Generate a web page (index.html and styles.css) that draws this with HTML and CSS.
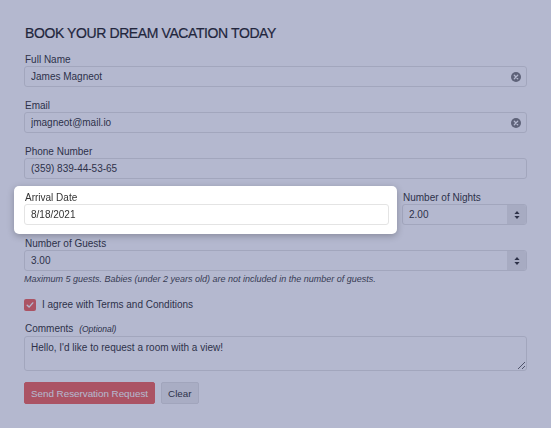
FILE: index.html
```html
<!DOCTYPE html>
<html lang="en">
<head>
    <meta charset="UTF-8">
    <meta name="viewport" content="width=device-width, initial-scale=1.0">
    <title>Book Your Dream Vacation</title>
    <link rel="stylesheet" href="styles.css">
</head>
<body>
    <div class="page">
        <h1>Book your dream vacation today</h1>

        <div class="field">
            <label>Full Name</label>
            <div class="control">
                <input type="text" value="James Magneot">
                <span class="clear">
                    <svg width="10" height="10" viewBox="0 0 10 10"><circle cx="5" cy="5" r="5" fill="#7d7d7d"/><path d="M3.3 3.3l3.4 3.4M6.7 3.3l-3.4 3.4" stroke="#fff" stroke-width="1.3" stroke-linecap="round"/></svg>
                </span>
            </div>
        </div>

        <div class="field">
            <label>Email</label>
            <div class="control">
                <input type="text" value="jmagneot@mail.io">
                <span class="clear">
                    <svg width="10" height="10" viewBox="0 0 10 10"><circle cx="5" cy="5" r="5" fill="#7d7d7d"/><path d="M3.3 3.3l3.4 3.4M6.7 3.3l-3.4 3.4" stroke="#fff" stroke-width="1.3" stroke-linecap="round"/></svg>
                </span>
            </div>
        </div>

        <div class="field">
            <label>Phone Number</label>
            <div class="control">
                <input type="text" value="(359) 839-44-53-65">
            </div>
        </div>

        <div class="field row">
            <div class="col-grow spotlight">
                <label>Arrival Date</label>
                <div class="control">
                    <input type="text" value="8/18/2021">
                </div>
            </div>
            <div class="col-nights">
                <label>Number of Nights</label>
                <div class="control">
                    <input type="text" value="2.00">
                    <span class="stepper">
                        <svg width="6" height="10" viewBox="0 0 6 10"><path d="M3 1L5.6 4H0.4z M3 9L5.6 6H0.4z" fill="#333"/></svg>
                    </span>
                </div>
            </div>
        </div>

        <div class="field">
            <label>Number of Guests</label>
            <div class="control">
                <input type="text" value="3.00">
                <span class="stepper">
                    <svg width="6" height="10" viewBox="0 0 6 10"><path d="M3 1L5.6 4H0.4z M3 9L5.6 6H0.4z" fill="#333"/></svg>
                </span>
            </div>
            <div class="help">Maximum 5 guests. Babies (under 2 years old) are not included in the number of guests.</div>
        </div>

        <label class="check">
            <span class="box">
                <svg width="8" height="8" viewBox="0 0 8 8"><path d="M1.2 4.2l1.9 1.9 3.7-4.2" stroke="#fff" stroke-width="1.4" fill="none" stroke-linecap="round" stroke-linejoin="round"/></svg>
            </span>
            I agree with Terms and Conditions
        </label>

        <div class="field">
            <label>Comments <em>(Optional)</em></label>
            <textarea>Hello, I'd like to request a room with a view!</textarea>
        </div>

        <div class="actions">
            <button class="btn btn-primary">Send Reservation Request</button>
            <button class="btn">Clear</button>
        </div>
    </div>

    <!-- dims everything except the highlighted field -->
    <div class="overlay"></div>
</body>
</html>
```

FILE: styles.css
```css
body {
    margin: 0;
    background: #fff;
    font-family: "Liberation Sans", Arial, sans-serif;
    color: #333;
}
.page {
    padding: 23px 24px 0 24px;
}
h1 {
    margin: 0 0 11px 1px;
    font-size: 14px;
    line-height: 20px;
    font-weight: normal;
    letter-spacing: -0.4px;
    text-transform: uppercase;
    color: #222;
    -webkit-text-stroke: 0.2px #222;
}
.field {
    margin-bottom: 13px;
}
.field label {
    display: block;
    font-size: 10px;
    line-height: 12px;
    margin-left: 1px;
}
.field label em {
    font-size: 8.5px;
    margin-left: 3px;
}
.control {
    display: flex;
    align-items: center;
    height: 21px;
    box-sizing: border-box;
    border: 1px solid #e4e4e4;
    border-radius: 3px;
    background: #fff;
}
.control input {
    flex: 1;
    min-width: 0;
    border: none;
    background: transparent;
    font: inherit;
    font-size: 10px;
    color: #333;
    padding: 0 6px;
    outline: none;
}
.clear {
    display: flex;
    margin-right: 5px;
}
.stepper {
    display: flex;
    align-items: center;
    justify-content: center;
    width: 19px;
    height: 100%;
    background: #ececec;
    border-radius: 0 2px 2px 0;
}
.row {
    display: flex;
    align-items: flex-start;
    gap: 13px;
}
.col-grow {
    flex: 1;
}
.col-nights {
    width: 125px;
}
.spotlight {
    position: relative;
    z-index: 10;
    background: #fff;
    margin: -6px -8px -9px -10px;
    padding: 6px 8px 9px 10px;
    border-radius: 5px;
    box-shadow: 0 2px 7px rgba(0, 0, 0, 0.25);
}
.help {
    margin-top: 3px;
    font-size: 9px;
    line-height: 11px;
    font-style: italic;
    color: #444;
}
.check {
    display: flex;
    align-items: center;
    font-size: 10px;
    line-height: 14px;
}
.check .box {
    display: flex;
    align-items: center;
    justify-content: center;
    width: 12px;
    height: 12px;
    border-radius: 2px;
    background: #f2675d;
    margin-right: 6px;
}
textarea {
    display: block;
    width: 100%;
    height: 35px;
    box-sizing: border-box;
    margin-top: 1px;
    border: 1px solid #e4e4e4;
    border-radius: 3px;
    padding: 5px 6px;
    font: inherit;
    font-size: 10px;
    color: #333;
    resize: vertical;
}
.check + .field {
    margin-top: 11px;
}
.actions {
    display: flex;
    gap: 6px;
    margin-top: -2px;
}
.btn {
    height: 22px;
    padding: 0 6px;
    border: 1px solid #e2e2e2;
    border-radius: 2px;
    background: #efefef;
    font: inherit;
    font-size: 9.8px;
    color: #333;
}
.btn-primary {
    background: #f2675d;
    border-color: #f2675d;
    color: #fff;
}
.overlay {
    position: fixed;
    inset: 0;
    z-index: 5;
    background: rgba(35, 48, 115, 0.34);
}
```
